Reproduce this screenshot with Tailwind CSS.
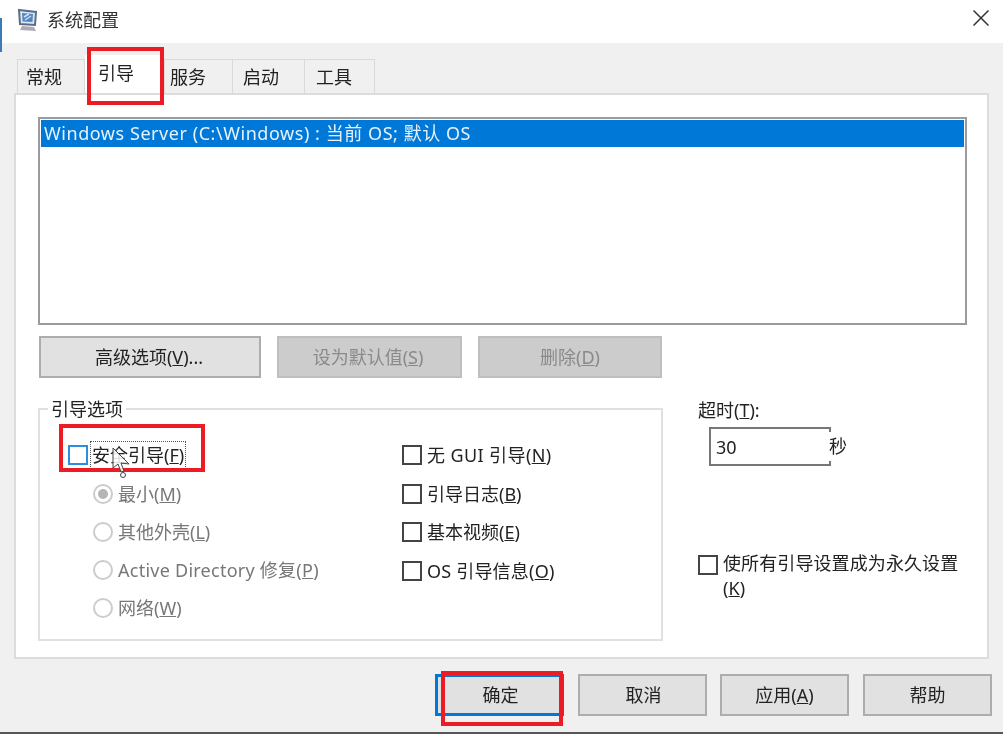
<!doctype html>
<html><head><meta charset="utf-8"><script src="https://cdn.jsdelivr.net/npm/@tailwindcss/browser@4"></script></head>
<body class="m-0">
<div class="relative w-[1003px] h-[734px] overflow-hidden bg-[#f0f0f0] flex flex-col text-[18px] leading-[24px] text-[#222] font-['Noto_Sans','Noto_Sans_CJK_SC',sans-serif] blur-[0.5px]">
  <header class="h-[43px] shrink-0 bg-white flex items-center pl-[17px] pr-[14px]">
    <svg width="22" height="24" viewBox="0 0 22 24" class="mr-[8px] -mt-[4px]"><path d="M2 2 L19 4 L18 17 L3 16 Z" fill="#dfe7f2" stroke="#5d6c86" stroke-width="2"/><path d="M5 5 L16 6 L15.500 14 L5.500 13.500 Z" fill="#4f86c8"/><path d="M7 9 L12 6 M8 12 L14 8" stroke="#cfe2f7" stroke-width="1.500"/><path d="M5 18 L17 19 L19 23 L3 22 Z" fill="#a9adb3"/></svg>
    <span class="text-[#333] text-[18px] -mt-[4px]">系统配置</span>
    <svg width="16" height="16" viewBox="0 0 16 16" class="ml-auto -mt-[8px]" stroke="#333" stroke-width="1.500"><path d="M0.500 0.500 L15.500 15.500 M15.500 0.500 L0.500 15.500"/></svg>
  </header>
  <nav class="h-[50px] shrink-0 pt-[16px] pl-[17px] flex items-stretch">
    <div class="w-[68px] border border-b-0 border-[#d9d9d9] flex items-center pl-[8px]">常规</div>
    <div class="w-[79px] -mt-[4px] bg-white flex items-center pb-[2px] pl-[13px]">引导</div>
    <div class="w-[69px] border border-b-0 border-[#d9d9d9] flex items-center pl-[5px]">服务</div>
    <div class="w-[72px] border border-l-0 border-b-0 border-[#d9d9d9] flex items-center pl-[10px]">启动</div>
    <div class="w-[70px] border border-l-0 border-b-0 border-[#d9d9d9] flex items-center pl-[11px]">工具</div>
  </nav>
  <main class="w-[975px] h-[566px] ml-[14px] shrink-0 bg-white border-2 border-[#dcdcdc] pl-[22px] pt-[22px]">
    <div class="w-[929px] h-[208px] border-2 border-[#9a9aa0] p-[1px]">
      <div class="h-[27px] bg-[#0078d7] text-[#e6f2fb] pl-[3px] pb-[2px] flex items-center tracking-[0.55px]">Windows Server (C:\Windows) : 当前 OS; 默认 OS</div>
    </div>
    <div class="flex gap-[16px] mt-[11px] ml-[1px]">
      <button class="w-[222px] h-[42px] border-2 border-[#adadad] bg-[#e1e1e1] pr-[2px]">高级选项(<u>V</u>)...</button>
      <button class="w-[185px] h-[42px] border-2 border-[#bfbfbf] bg-[#cccccc] text-[#8a8a8a] pr-[3px]">设为默认值(<u>S</u>)</button>
      <button class="w-[184px] h-[42px] border-2 border-[#bfbfbf] bg-[#cccccc] text-[#8a8a8a]">删除(<u>D</u>)</button>
    </div>
    <div class="flex mt-[30px]">
      <section class="relative w-[625px] h-[233px] border-2 border-[#e0e0e0] grid grid-cols-[334px_1fr] pl-[28px] pt-[33px]">
        <span class="absolute left-[8px] -top-[13px] bg-white px-[3px]">引导选项</span>
        <div class="flex flex-col">
          <label class="h-[24px] flex items-center gap-[3px]"><span class="w-[20px] h-[20px] border-2 border-[#2b8ee0] bg-white shrink-0"></span><span class="px-[1px] h-[26px] flex items-center outline-dotted outline-1 outline-[#555]">安全引导(<u>F</u>)</span></label>
          <div class="flex flex-col gap-[14px] mt-[15px] ml-[25px] text-[#777]">
            <label class="h-[24px] flex items-center gap-[5px]"><span class="w-[20px] h-[20px] rounded-full border-2 border-[#ccc] flex items-center justify-center shrink-0"><span class="w-[10px] h-[10px] rounded-full bg-[#b5b5b5]"></span></span><span>最小(<u>M</u>)</span></label>
            <label class="h-[24px] flex items-center gap-[5px]"><span class="w-[20px] h-[20px] rounded-full border-2 border-[#ccc] shrink-0"></span><span>其他外壳(<u>L</u>)</span></label>
            <label class="h-[24px] flex items-center gap-[5px]"><span class="w-[20px] h-[20px] rounded-full border-2 border-[#ccc] shrink-0"></span><span class="tracking-[0.25px]">Active Directory 修复(<u>P</u>)</span></label>
            <label class="h-[24px] flex items-center gap-[5px]"><span class="w-[20px] h-[20px] rounded-full border-2 border-[#ccc] shrink-0"></span><span>网络(<u>W</u>)</span></label>
          </div>
        </div>
        <div class="flex flex-col gap-[14.600px]">
          <label class="h-[24px] flex items-center gap-[5px]"><span class="w-[20px] h-[20px] border-2 border-[#444] shrink-0"></span><span class="tracking-[0.4px]">无 GUI 引导(<u>N</u>)</span></label>
          <label class="h-[24px] flex items-center gap-[5px]"><span class="w-[20px] h-[20px] border-2 border-[#444] shrink-0"></span><span>引导日志(<u>B</u>)</span></label>
          <label class="h-[24px] flex items-center gap-[5px]"><span class="w-[20px] h-[20px] border-2 border-[#444] shrink-0"></span><span>基本视频(<u>E</u>)</span></label>
          <label class="h-[24px] flex items-center gap-[5px]"><span class="w-[20px] h-[20px] border-2 border-[#444] shrink-0"></span><span class="tracking-[0.2px]">OS 引导信息(<u>O</u>)</span></label>
        </div>
      </section>
      <aside class="ml-[35px] w-[264px] -mt-[10px]">
        <div>超时(<u>T</u>):</div>
        <div class="flex items-center ml-[11px] mt-[6px]">
          <div class="relative w-[121px] h-[39px] border-2 border-r-0 border-[#777] pl-[5px] flex items-center -mt-[1px]">30
            <span class="absolute -right-[1px] -top-[2px] w-[2px] h-[5px] bg-[#777]"></span>
            <span class="absolute -right-[1px] -bottom-[2px] w-[2px] h-[5px] bg-[#777]"></span>
          </div>
          <span class="-ml-[1px] pb-[2px]">秒</span>
        </div>
        <div class="flex gap-[5px] mt-[85px]">
          <span class="w-[20px] h-[20px] mt-[4px] border-2 border-[#444] shrink-0"></span>
          <span class="leading-[25px] tracking-[0.1px]">使所有引导设置成为永久设置<br>(<u>K</u>)</span>
        </div>
      </aside>
    </div>
  </main>
  <footer class="flex justify-end gap-[14px] pr-[11px] mt-[15px]">
    <button class="w-[129px] h-[42px] border-[3px] border-[#0078d7] bg-[#e1e1e1] pl-[2px]">确定</button>
    <button class="w-[129px] h-[42px] mr-[-1px] border-2 border-[#adadad] bg-[#e1e1e1] pl-[2px]">取消</button>
    <button class="w-[129px] h-[42px] border-2 border-[#adadad] bg-[#e1e1e1]">应用(<u>A</u>)</button>
    <button class="w-[129px] h-[42px] border-2 border-[#adadad] bg-[#e1e1e1]">帮助</button>
  </footer>
  <div class="absolute left-0 right-0 bottom-0 h-[2px] bg-[#555]"></div>
  <div class="absolute left-0 top-[18px] h-[34px] w-[2px] bg-[#3a7ab8]"></div>
  <div class="absolute left-[87px] top-[47px] w-[77px] h-[58px] border-[4px] border-[#ec1c24]"></div>
  <div class="absolute left-[59px] top-[424px] w-[146px] h-[48px] border-[4px] border-[#ec1c24]"></div>
  <div class="absolute left-[441px] top-[671px] w-[122px] h-[55px] border-[4px] border-[#ec1c24]"></div>
  <svg class="absolute left-[110px] top-[447px]" width="22" height="32" viewBox="0 0 22 32"><path d="M3 1 L3 21 L8 17 L11 25 L14 24 L11 16 L19 17 Z" fill="#fff" fill-opacity="0.85" stroke="#444" stroke-width="1"/><circle cx="13" cy="28" r="2.500" fill="none" stroke="#444"/></svg>
</div>
</body></html>
